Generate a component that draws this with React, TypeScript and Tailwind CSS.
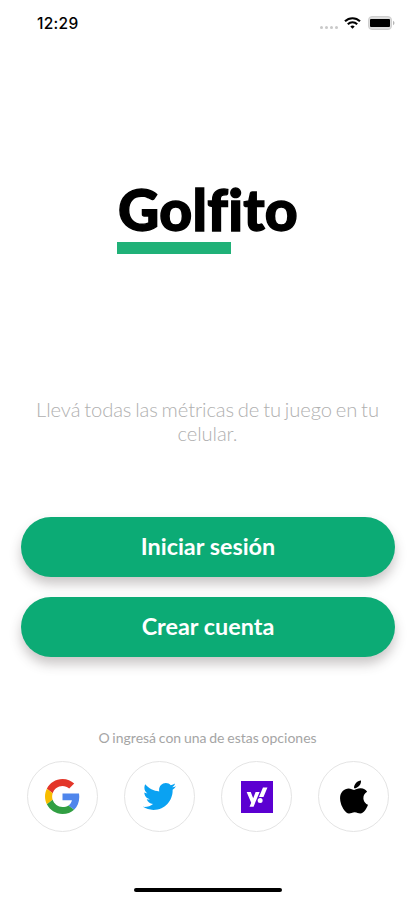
import type { ReactNode } from 'react';
import { FaApple, FaTwitter, FaYahoo } from 'react-icons/fa';

function StatusBar() {
  return (
    <header className="flex h-[46px] items-center justify-between pl-[37px] pr-[20px]">
      <span className="mt-[2px] font-['Inter',sans-serif] text-[15.5px] leading-none font-medium tracking-[0.3px] text-black">12:29</span>
      <div className="flex items-center">
        <div className="mt-2 flex gap-[2px]">
          <span className="size-[3px] rounded-full bg-[#c9c9c9]"></span>
          <span className="size-[3px] rounded-full bg-[#c9c9c9]"></span>
          <span className="size-[3px] rounded-full bg-[#c9c9c9]"></span>
          <span className="size-[3px] rounded-full bg-[#c9c9c9]"></span>
        </div>
        <svg className="ml-[6px]" width="17" height="12" viewBox="0 0 17 12" fill="none" stroke="#000" strokeWidth="2.1">
          <path d="M1 4.3C5.2.2 11.8.2 16 4.3" />
          <path d="M3.8 7.2c2.7-2.6 6.7-2.6 9.4 0" />
          <path d="M8.5 11.8 6.3 9.5c1.3-1.2 3.1-1.2 4.4 0z" fill="#000" stroke="none" />
        </svg>
        <svg className="ml-[7px]" width="27" height="14" viewBox="0 0 27 14">
          <rect x=".5" y=".5" width="23" height="13" rx="3.5" fill="#ddd" stroke="#cfcfcf" />
          <rect x="2" y="3" width="20" height="8" rx="1" fill="#000" />
          <path d="M25 4.8c2 .8 2 3.6 0 4.4z" fill="#b5b5b5" />
        </svg>
      </div>
    </header>
  );
}

function GoogleLogo() {
  return (
    <svg width="35" height="35" viewBox="0 0 48 48">
      <path fill="#E33629" d="M24 9.5c3.54 0 6.71 1.22 9.21 3.6l6.85-6.85C35.9 2.38 30.47 0 24 0 14.62 0 6.51 5.38 2.56 13.22l7.98 6.19C12.43 13.72 17.74 9.5 24 9.5z" />
      <path fill="#4F86EC" d="M46.98 24.55c0-1.57-.15-3.09-.38-4.55H24v9.02h12.94c-.58 2.96-2.26 5.48-4.78 7.18l7.73 6c4.51-4.18 7.09-10.36 7.09-17.65z" />
      <path fill="#F8BD00" d="M10.53 28.59c-.48-1.45-.76-2.99-.76-4.59s.27-3.14.76-4.59l-7.98-6.19C.92 16.46 0 20.12 0 24s.92 7.54 2.56 10.78l7.97-6.19z" />
      <path fill="#319F43" d="M24 48c6.48 0 11.93-2.13 15.89-5.81l-7.73-6c-2.15 1.45-4.92 2.3-8.16 2.3-6.26 0-11.57-4.22-13.47-9.91l-7.98 6.19C6.51 42.62 14.62 48 24 48z" />
    </svg>
  );
}

function PrimaryButton({ children }: { children: ReactNode }) {
  return (
    <button className="h-[60px] w-full rounded-full bg-[#0cab75] text-[23.4px] font-bold text-white shadow-[0_7px_12px_rgba(60,50,50,0.28)]">
      {children}
    </button>
  );
}

function SocialButton({ label, children }: { label: string; children: ReactNode }) {
  return (
    <button aria-label={label} className="flex size-[71px] items-center justify-center rounded-full border border-[#e4e4e4] bg-white">
      {children}
    </button>
  );
}

export default function App() {
  return (
    <main className="flex h-[900px] w-full flex-col bg-white font-['Lato',sans-serif]">
      <StatusBar />

      {/* Logo */}
      <div className="mt-[134px] ml-[117px] w-[181px]">
        <h1 className="h-[62px] pl-px text-[57px] leading-[59px] font-black tracking-[0.3px] whitespace-nowrap text-black [-webkit-text-stroke:1.4px_#000] [font-variant-ligatures:none]">
          Golfito
        </h1>
        <div className="h-[12px] w-[114px] bg-[#20b178]"></div>
      </div>

      <p className="mt-[143px] px-[30px] text-center text-[20.2px] leading-[24px] font-light tracking-[-0.1px] text-[#b0b0b0] [word-spacing:-1.5px]">
        Llevá todas las métricas de tu juego en tu celular.
      </p>

      <div className="mt-[72px] flex flex-col gap-5 pr-[20px] pl-[21px]">
        <PrimaryButton>Iniciar sesión</PrimaryButton>
        <PrimaryButton>Crear cuenta</PrimaryButton>
      </div>

      {/* Social login */}
      <p className="mt-[71px] text-center text-[14px] leading-5 font-normal text-[#a5a5a5] [word-spacing:-0.8px]">O ingresá con una de estas opciones</p>
      <div className="mt-[13px] flex justify-between pr-[26px] pl-[27px]">
        <SocialButton label="Google">
          <GoogleLogo />
        </SocialButton>
        <SocialButton label="Twitter">
          <FaTwitter size={33} className="text-[#0aa2f2]" />
        </SocialButton>
        <SocialButton label="Yahoo">
          <span className="flex size-8 items-center justify-center bg-[#5b00d1]">
            <FaYahoo size={22} className="text-white" />
          </span>
        </SocialButton>
        <SocialButton label="Apple">
          <FaApple size={38} className="text-black" />
        </SocialButton>
      </div>

      <div className="mt-auto mb-2 h-1 w-[148px] self-center rounded-full bg-black"></div>
    </main>
  );
}
